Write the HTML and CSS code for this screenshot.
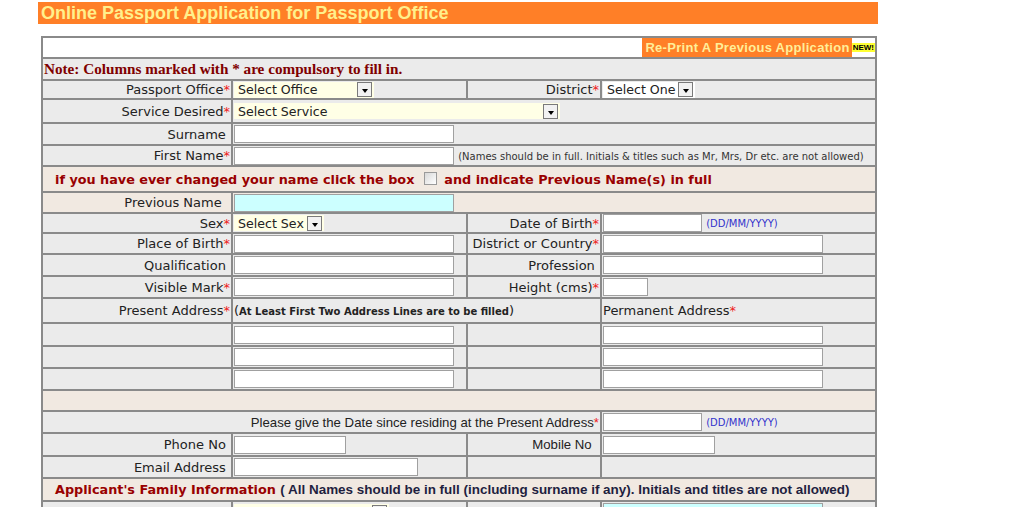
FILE: index.html
```html
<!DOCTYPE html>
<html lang="en">
<head>
    <meta charset="UTF-8">
    <title>Online Passport Application</title>
    <link rel="stylesheet" href="styles.css">
</head>
<body>
    <div id="page">
        <div id="page-title">Online Passport Application for Passport Office</div>

        <table id="form-table">
            <colgroup>
                <col class="col-a">
                <col class="col-b">
                <col class="col-c">
                <col class="col-d">
            </colgroup>
            <tr class="h21">
                <td colspan="4" class="cell-white right"><span class="reprint">Re-Print A Previous Application</span><span class="new-badge">NEW!</span></td>
            </tr>
            <tr>
                <td colspan="4" class="note">Note: Columns marked with * are compulsory to fill in.</td>
            </tr>
            <tr class="h19">
                <td class="lbl">Passport Office<span class="req">*</span></td>
                <td><span class="select sel-office"><span>Select Office</span><span class="select-btn"></span></span></td>
                <td class="lbl">District<span class="req">*</span></td>
                <td><span class="select sel-district white"><span>Select One</span><span class="select-btn"></span></span></td>
            </tr>
            <tr class="h24">
                <td class="lbl">Service Desired<span class="req">*</span></td>
                <td colspan="3"><span class="select sel-service"><span>Select Service</span><span class="select-btn"></span></span></td>
            </tr>
            <tr>
                <td class="lbl">Surname&nbsp;</td>
                <td colspan="3"><input type="text" class="txt txt-long"></td>
            </tr>
            <tr class="h21">
                <td class="lbl">First Name<span class="req">*</span></td>
                <td colspan="3"><input type="text" class="txt txt-long"> <span class="hint">(Names should be in full. Initials &amp; titles such as Mr, Mrs, Dr etc. are not allowed)</span></td>
            </tr>
            <tr class="h26">
                <td colspan="4" class="head">if you have ever changed your name click the box <input type="checkbox" class="chk"> and indicate Previous Name(s) in full</td>
            </tr>
            <tr class="h21 beige">
                <td class="lbl">Previous Name&nbsp;&nbsp;</td>
                <td colspan="3"><input type="text" class="txt txt-long cyan"></td>
            </tr>
            <tr class="h20">
                <td class="lbl">Sex<span class="req">*</span></td>
                <td><span class="select sel-sex"><span>Select Sex</span><span class="select-btn"></span></span></td>
                <td class="lbl">Date of Birth<span class="req">*</span></td>
                <td><input type="text" class="txt txt-date"> <span class="date-hint">(DD/MM/YYYY)</span></td>
            </tr>
            <tr class="h21">
                <td class="lbl">Place of Birth<span class="req">*</span></td>
                <td><input type="text" class="txt txt-long"></td>
                <td class="lbl">District or Country<span class="req">*</span></td>
                <td><input type="text" class="txt txt-long"></td>
            </tr>
            <tr>
                <td class="lbl">Qualification&nbsp;</td>
                <td><input type="text" class="txt txt-long"></td>
                <td class="lbl">Profession&nbsp;</td>
                <td><input type="text" class="txt txt-long"></td>
            </tr>
            <tr>
                <td class="lbl">Visible Mark<span class="req">*</span></td>
                <td><input type="text" class="txt txt-long"></td>
                <td class="lbl">Height (cms)<span class="req">*</span></td>
                <td><input type="text" class="txt txt-short"></td>
            </tr>
            <tr class="h25">
                <td class="lbl">Present Address<span class="req">*</span></td>
                <td colspan="2" class="addr-note">(<b>At Least First Two Address Lines are to be filled</b>)</td>
                <td class="plain">Permanent Address<span class="req">*</span></td>
            </tr>
            <tr class="h23">
                <td></td>
                <td><input type="text" class="txt txt-long"></td>
                <td></td>
                <td><input type="text" class="txt txt-long"></td>
            </tr>
            <tr>
                <td></td>
                <td><input type="text" class="txt txt-long"></td>
                <td></td>
                <td><input type="text" class="txt txt-long"></td>
            </tr>
            <tr>
                <td></td>
                <td><input type="text" class="txt txt-long"></td>
                <td></td>
                <td><input type="text" class="txt txt-long"></td>
            </tr>
            <tr class="h21 beige">
                <td colspan="4"></td>
            </tr>
            <tr>
                <td colspan="3" class="lbl arial">Please give the Date since residing at the Present Address<span class="req">*</span></td>
                <td><input type="text" class="txt txt-date"> <span class="date-hint">(DD/MM/YYYY)</span></td>
            </tr>
            <tr class="h23">
                <td class="lbl">Phone No&nbsp;</td>
                <td><input type="text" class="txt txt-phone"></td>
                <td class="lbl arial">Mobile No&nbsp;&nbsp;</td>
                <td><input type="text" class="txt txt-phone"></td>
            </tr>
            <tr>
                <td class="lbl">Email Address&nbsp;</td>
                <td><input type="text" class="txt txt-email"></td>
                <td></td>
                <td></td>
            </tr>
            <tr class="h23">
                <td colspan="4" class="head">Applicant's Family Information <span class="family-note">( All Names should be in full (including surname if any). Initials and titles are not allowed)</span></td>
            </tr>
            <tr>
                <td></td>
                <td><span class="select sel-family"><span></span><span class="select-btn"></span></span></td>
                <td></td>
                <td><input type="text" class="txt txt-long cyan"></td>
            </tr>
        </table>
    </div>
</body>
</html>
```

FILE: styles.css
```css
* {
    box-sizing: border-box;
}

html, body {
    margin: 0;
    padding: 0;
    background-color: #ffffff;
}

#page {
    padding: 2px 0 0 38px;
}

#page-title {
    width: 840px;
    height: 22px;
    padding-left: 3px;
    background-color: #ff7f27;
    color: #fff08c;
    font: bold 18px/22px "Liberation Sans", Arial, sans-serif;
}

#form-table {
    margin: 12px 0 0 3px;
    width: 836px;
    table-layout: fixed;
    border-collapse: separate;
    border-spacing: 0;
    border: 1px solid #8a8a8a;
    font: 13px/15px "DejaVu Sans", Verdana, sans-serif;
    color: #222222;
}

.col-a { width: 190px; }
.col-b { width: 235px; }
.col-c { width: 134px; }
.col-d { width: 275px; }

#form-table tr { height: 22px; }
#form-table tr.h19 { height: 19px; }
#form-table tr.h20 { height: 20px; }
#form-table tr.h21 { height: 21px; }
#form-table tr.h23 { height: 23px; }
#form-table tr.h24 { height: 24px; }
#form-table tr.h25 { height: 25px; }
#form-table tr.h26 { height: 26px; }

#form-table td {
    border: 1px solid #8a8a8a;
    background-color: #ebebeb;
    padding: 0 1px;
    vertical-align: middle;
    white-space: nowrap;
    overflow: hidden;
}

#form-table tr.beige td,
#form-table td.head {
    background-color: #f1e9e1;
}

#form-table td.cell-white {
    background-color: #ffffff;
    padding: 0;
}

.right { text-align: right; }

.lbl { text-align: right; }

.plain { padding-left: 2px; }

.arial {
    font-family: "Liberation Sans", Arial, sans-serif;
    font-size: 13.2px;
}

.req { color: #ee2020; }

/* top link */
.reprint {
    display: inline-block;
    vertical-align: top;
    height: 19px;
    padding: 0 2px 0 3px;
    background-color: #ff7f27;
    color: #ffee99;
    font: bold 13px/19px "Liberation Sans", Arial, sans-serif;
    letter-spacing: 0.3px;
}

.new-badge {
    display: inline-block;
    vertical-align: top;
    margin-top: 5px;
    padding: 0 1px;
    background-color: #ffff33;
    color: #000000;
    font: bold 8px/9px "Liberation Sans", Arial, sans-serif;
}

#form-table td.note {
    padding-left: 1px;
    color: #800000;
    font: bold 15.2px/18px "Liberation Serif", "Times New Roman", serif;
}

#form-table td.head {
    padding-left: 12px;
    color: #990000;
    font-size: 12.8px;
    font-weight: bold;
}

.family-note {
    color: #1f1f3f;
    font: bold 13.45px "Liberation Sans", Arial, sans-serif;
}

.addr-note b {
    font-size: 10px;
}

.hint {
    font-size: 10px;
    color: #333333;
}

.date-hint {
    font-size: 10px;
    color: #3333cc;
}

/* inputs */
.txt {
    display: inline-block;
    vertical-align: middle;
    height: 18px;
    margin: 0;
    padding: 0 2px;
    border: 1px solid #a0a0a0;
    background-color: #ffffff;
    font: 13px "DejaVu Sans", sans-serif;
    outline: none;
}

.txt.cyan { background-color: #ccffff; }

.txt-long { width: 220px; }
.txt-date { width: 99px; }
.txt-short { width: 45px; }
.txt-phone { width: 112px; }
.txt-email { width: 184px; }

.chk {
    -webkit-appearance: none;
    appearance: none;
    display: inline-block;
    vertical-align: -1px;
    width: 13px;
    height: 13px;
    margin: 0 3px 0 5px;
    border: 1px solid #9a9a9a;
    background: linear-gradient(135deg, #d8d8d8, #ffffff);
}

/* old style drop downs */
.select {
    display: inline-flex;
    align-items: center;
    justify-content: space-between;
    vertical-align: middle;
    height: 16px;
    padding: 0 2px 0 4px;
    background-color: #ffffe6;
    font-size: 12.6px;
}

.select.white { background-color: #ffffff; }

.select-btn {
    display: flex;
    align-items: center;
    justify-content: center;
    width: 15px;
    height: 15px;
    border: 1px solid #7a7a7a;
    background-color: #f2f2f2;
}

.select-btn::after {
    content: "";
    margin-top: 3px;
    border-top: 4px solid #000000;
    border-left: 3px solid transparent;
    border-right: 3px solid transparent;
}

.sel-office { width: 140px; }
.sel-service { width: 326px; }
.sel-district { width: 92px; }
.sel-sex { width: 90px; }
.sel-family { width: 155px; }
```
